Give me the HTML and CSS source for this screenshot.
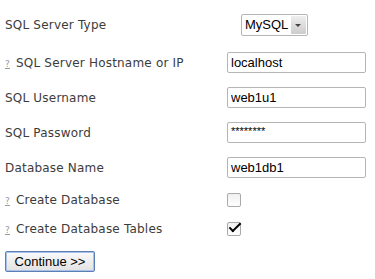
FILE: index.html
```html
<!DOCTYPE html>
<html lang="en">
<head>
    <meta charset="UTF-8">
    <title>Database Setup</title>
    <link rel="stylesheet" href="styles.css">
</head>
<body>
    <form class="setup">
        <div class="row first">
            <label class="label">SQL Server Type</label>
            <span class="select-wrap">
                <select class="select">
                    <option>MySQL</option>
                </select>
                <span class="select-arrow"></span>
            </span>
        </div>
        <div class="row">
            <label class="label"><a class="help" href="#">?</a> SQL Server Hostname or IP</label>
            <input class="field" type="text" value="localhost">
        </div>
        <div class="row">
            <label class="label">SQL Username</label>
            <input class="field" type="text" value="web1u1">
        </div>
        <div class="row">
            <label class="label">SQL Password</label>
            <input class="field secret" type="text" value="********">
        </div>
        <div class="row">
            <label class="label">Database Name</label>
            <input class="field" type="text" value="web1db1">
        </div>
        <div class="row check">
            <label class="label"><a class="help" href="#">?</a> Create Database</label>
            <input class="box" type="checkbox">
        </div>
        <div class="row check">
            <label class="label"><a class="help" href="#">?</a> Create Database Tables</label>
            <input class="box" type="checkbox" checked>
        </div>
        <button class="continue" type="button">Continue &gt;&gt;</button>
    </form>
</body>
</html>
```

FILE: styles.css
```css
body {
    margin: 0;
    background: #fff;
    font-family: "DejaVu Sans", Verdana, sans-serif;
    font-size: 12px;
    color: #3c3c3c;
}

.setup {
    padding: 7px 0 0 5px;
}

.row {
    display: grid;
    grid-template-columns: 222px auto;
    align-items: center;
    justify-items: start;
    height: 35px;
}

.row.first {
    grid-template-columns: 236px auto;
    margin-bottom: 3px;
}

.row.check {
    height: 29px;
}

.label {
    white-space: nowrap;
    letter-spacing: 0.2px;
}

.help {
    color: #999;
    font-size: 9px;
    margin-right: 2px;
}

.field {
    box-sizing: border-box;
    width: 139px;
    height: 21px;
    margin: 0;
    padding: 1px 3px;
    border: 1px solid #b5b5b5;
    border-radius: 2px;
    font-family: "Liberation Sans", Arial, sans-serif;
    font-size: 13px;
    color: #000;
}

.field.secret {
    font-size: 11px;
    padding-bottom: 4px;
}

.select-wrap {
    position: relative;
    display: inline-block;
}

.select {
    box-sizing: border-box;
    width: 67px;
    height: 22px;
    margin: 0;
    padding: 0 18px 0 3px;
    appearance: none;
    -webkit-appearance: none;
    background: #fff;
    border: 1px solid #b5b5b5;
    border-radius: 2px;
    font-family: "Liberation Sans", Arial, sans-serif;
    font-size: 13px;
    color: #000;
}

.select-arrow {
    position: absolute;
    top: 2px;
    right: 2px;
    width: 15px;
    height: 18px;
    background: linear-gradient(#eee, #ccc);
    border-radius: 1px;
    pointer-events: none;
}

.select-arrow::after {
    content: "";
    position: absolute;
    left: 4px;
    top: 8px;
    border-left: 3px solid transparent;
    border-right: 3px solid transparent;
    border-top: 3px solid #444;
}

.box {
    appearance: none;
    -webkit-appearance: none;
    position: relative;
    box-sizing: border-box;
    width: 14px;
    height: 14px;
    margin: 0;
    border: 1px solid #aaa;
    border-radius: 2px;
    background: linear-gradient(#f0f0f0, #fff);
}

.box:checked::after {
    content: "";
    position: absolute;
    left: 4px;
    top: -3px;
    width: 4px;
    height: 10px;
    border-right: 2.5px solid #000;
    border-bottom: 2.5px solid #000;
    transform: rotate(45deg);
}

.continue {
    box-sizing: border-box;
    width: 90px;
    height: 21px;
    margin-top: 8px;
    padding: 0;
    border: 1px solid #5a7fb5;
    border-radius: 2px;
    background: linear-gradient(#fafafa, #e2e2e2);
    box-shadow: inset 0 0 0 1px #a9c0e8;
    font-family: "Liberation Sans", Arial, sans-serif;
    font-size: 13px;
    color: #000;
}
```
